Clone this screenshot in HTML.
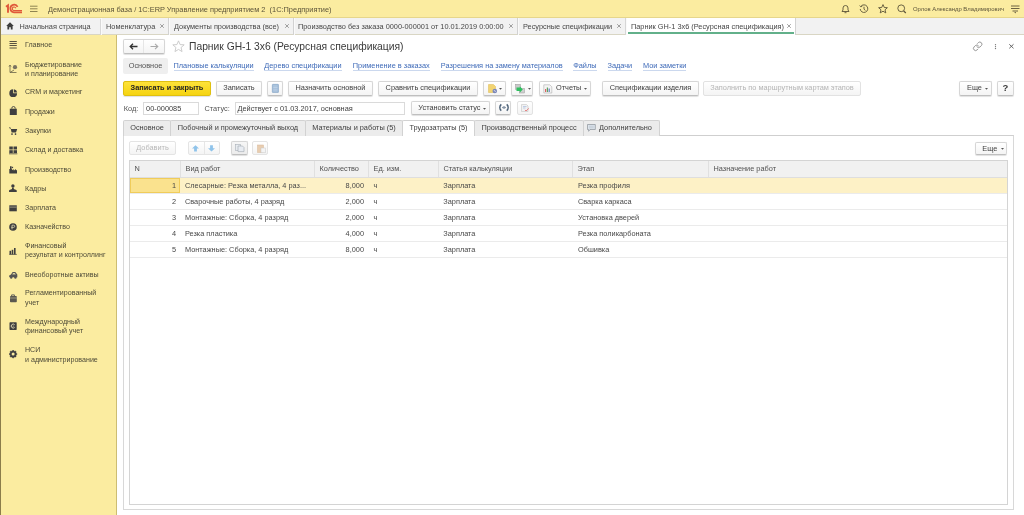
<!DOCTYPE html><html><head><meta charset="utf-8"><style>
*{box-sizing:border-box;margin:0;padding:0}
html,body{width:1024px;height:515px;overflow:hidden;background:#fff;font-family:"Liberation Sans",sans-serif;font-size:7.35px;color:#404040}
.a{position:absolute;white-space:nowrap}
svg{position:absolute;overflow:visible}
#top{left:0;top:0;width:1024px;height:18px;background:#fbeca0;border-bottom:1px solid #e6d68c}
#lbar{left:0;top:0;width:1px;height:515px;background:#8b7d4a;z-index:5}
#tabs{left:0;top:18px;width:1024px;height:17px;background:#f2f2f2;border-bottom:1px solid #d9d6c4}
.wt{position:absolute;top:18px;height:17px;line-height:16px;color:#474747;border-right:1px solid #d2d2d2;box-shadow:inset 1px 0 0 #fafafa;white-space:nowrap}
.wt .t{position:absolute;top:0.8px}
.wt .x{position:absolute;top:0;color:#777;font-size:7.5px}
#side{left:0;top:35px;width:117px;height:480px;background:#fbeca0;border-right:1px solid #cdbd72}
.si{position:absolute;left:25px;color:#4d4a38;font-size:7.1px;line-height:9.2px;white-space:nowrap}
.btn{position:absolute;height:15px;line-height:11.5px;border:1px solid #d6d6d6;border-bottom-color:#bfbfbf;border-radius:2px;background:linear-gradient(#fff,#f4f4f4);box-shadow:0 0.6px 0.8px rgba(0,0,0,.12);text-align:center;color:#404040;white-space:nowrap}
.lnk{position:absolute;top:62px;color:#3e6ab8;border-bottom:1px solid #cbd8ee;line-height:8px;white-space:nowrap}
.inp{position:absolute;height:13px;line-height:11px;border:1px solid #dadada;background:#fff;padding-left:3px;color:#404040;white-space:nowrap}
.tab{position:absolute;top:120px;height:16px;line-height:14px;background:#ececec;border:1px solid #d2d2d2;border-bottom:none;text-align:center;color:#404040;border-radius:2px 2px 0 0;white-space:nowrap}
.th{position:absolute;top:161px;height:16px;line-height:16px;color:#505050;border-left:1px solid #e2e2e2;white-space:nowrap}
.row{position:absolute;left:130px;width:877px;height:16px;border-bottom:1px solid #ececec}
.c{position:absolute;line-height:16px;color:#484848;white-space:nowrap}
.s{}
html{background:#fff}
body{filter:blur(0.45px)}
</style></head><body>
<div id="top" class="a"></div>
<div id="tabs" class="a"></div>
<div id="side" class="a"></div>
<div id="lbar" class="a"></div>
<svg style="left:0;top:0" width="48" height="18" viewBox="0 0 48 18"><path d="M6 6.8 L8 5.3 V12.7" stroke="#e0583a" stroke-width="1.9" fill="none"/><path d="M17.6 6.9 A3.8 3.8 0 1 0 14 12.3 H22" stroke="#e0583a" stroke-width="1.7" fill="none"/><path d="M15.8 8.2 A1.8 1.8 0 1 0 14 10.6 H22" stroke="#e0583a" stroke-width="1.1" fill="none"/></svg>
<svg style="left:30px;top:5px" width="8" height="8" viewBox="0 0 8 8"><path d="M0 1.2 H7.5 M0 3.8 H7.5 M0 6.5 H7.5" stroke="#8f8452" stroke-width="1"/></svg>
<div class="a" style="left:48px;top:4.5px;line-height:10px;color:#5b5339;font-size:7.4px"><span class="s">Демонстрационная база / 1С:ERP Управление предприятием 2&nbsp; (1С:Предприятие)</span></div>
<svg style="left:841px;top:4px" width="9" height="10" viewBox="0 0 9 10"><path d="M1 7.5 H8 L7 6 V4 A2.5 2.5 0 0 0 2 4 V6 Z M3.5 8.7 H5.5" stroke="#5b5339" stroke-width="0.9" fill="none"/></svg>
<svg style="left:859px;top:4px" width="10" height="10" viewBox="0 0 10 10"><path d="M2 2.3 A3.8 3.8 0 1 1 1.2 5" stroke="#5b5339" stroke-width="0.9" fill="none"/><path d="M0.6 1.5 L1.9 3 L3.5 1.8" stroke="#5b5339" stroke-width="0.8" fill="none"/><path d="M5 2.8 V5.2 L6.4 6.4" stroke="#5b5339" stroke-width="0.9" fill="none"/></svg>
<svg style="left:878px;top:4px" width="10" height="10" viewBox="0 0 10 10"><path d="M5 0.6 L6.3 3.5 L9.4 3.7 L7 5.8 L7.8 8.9 L5 7.2 L2.2 8.9 L3 5.8 L0.6 3.7 L3.7 3.5 Z" stroke="#5b5339" stroke-width="0.9" fill="none" stroke-linejoin="round"/></svg>
<svg style="left:897px;top:4px" width="10" height="10" viewBox="0 0 10 10"><circle cx="4.2" cy="4.3" r="3.4" stroke="#5b5339" stroke-width="0.9" fill="none"/><path d="M6.6 6.8 L8.8 9" stroke="#5b5339" stroke-width="1.2"/></svg>
<div class="a" style="left:913px;top:5px;line-height:8px;color:#5b5339;font-size:5.9px"><span class="s">Орлов Александр Владимирович</span></div>
<svg style="left:1011px;top:5px" width="9" height="9" viewBox="0 0 9 9"><path d="M0 1 H8.5 M0 3.5 H8.5 M1.5 6 H7" stroke="#5b5339" stroke-width="0.9"/><path d="M3.4 7 L4.25 8.5 L5.1 7Z" fill="#5b5339"/></svg>
<svg style="left:6px;top:22px" width="8" height="8" viewBox="0 0 8 8"><path d="M4 0.3 L7.8 4 H6.6 V7.6 H4.8 V5.3 H3.2 V7.6 H1.4 V4 H0.2 Z" fill="#3d3d3d"/></svg>
<div class="a" style="left:19.5px;top:18.8px;line-height:16px;color:#474747"><span class="s">Начальная страница</span></div>
<div class="a" style="left:100px;top:19px;width:1px;height:16px;background:#d8d8d8"></div>
<div class="wt" style="left:101px;width:68px"><span class="t" style="left:5.0px"><span class="s">Номенклатура</span></span><svg style="right:4.5px;top:6px;width:4px;height:4px" viewBox="0 0 4 4"><path d="M0.2 0.2 L3.8 3.8 M3.8 0.2 L0.2 3.8" stroke="#7a7a7a" stroke-width="0.7"/></svg></div>
<div class="wt" style="left:169px;width:125px"><span class="t" style="left:5.0px"><span class="s">Документы производства (все)</span></span><svg style="right:4.5px;top:6px;width:4px;height:4px" viewBox="0 0 4 4"><path d="M0.2 0.2 L3.8 3.8 M3.8 0.2 L0.2 3.8" stroke="#7a7a7a" stroke-width="0.7"/></svg></div>
<div class="wt" style="left:294px;width:224px"><span class="t" style="left:4.0px"><span class="s">Производство без заказа 0000-000001 от 10.01.2019 0:00:00</span></span><svg style="right:4.5px;top:6px;width:4px;height:4px" viewBox="0 0 4 4"><path d="M0.2 0.2 L3.8 3.8 M3.8 0.2 L0.2 3.8" stroke="#7a7a7a" stroke-width="0.7"/></svg></div>
<div class="wt" style="left:518px;width:108px"><span class="t" style="left:5.0px"><span class="s">Ресурсные спецификации</span></span><svg style="right:4.5px;top:6px;width:4px;height:4px" viewBox="0 0 4 4"><path d="M0.2 0.2 L3.8 3.8 M3.8 0.2 L0.2 3.8" stroke="#7a7a7a" stroke-width="0.7"/></svg></div>
<div class="wt" style="left:625px;width:171px;background:#fff;border-left:1px solid #d6d6d6"><span class="t" style="left:5px"><span class="s">Парник GH-1 3х6 (Ресурсная спецификация)</span></span><svg style="right:4.5px;top:6px;width:4px;height:4px" viewBox="0 0 4 4"><path d="M0.2 0.2 L3.8 3.8 M3.8 0.2 L0.2 3.8" stroke="#7a7a7a" stroke-width="0.7"/></svg><div style="position:absolute;left:2px;right:1px;bottom:1px;height:2px;background:#62b08a"></div></div>
<div class="si" style="top:41.2px"><span class="s">Главное</span></div>
<div class="si" style="top:60.9px"><span class="s">Бюджетирование</span><br><span class="s">и планирование</span></div>
<div class="si" style="top:88.1px"><span class="s">CRM и маркетинг</span></div>
<div class="si" style="top:107.9px"><span class="s">Продажи</span></div>
<div class="si" style="top:127.2px"><span class="s">Закупки</span></div>
<div class="si" style="top:146.4px"><span class="s">Склад и доставка</span></div>
<div class="si" style="top:165.7px"><span class="s">Производство</span></div>
<div class="si" style="top:184.8px"><span class="s">Кадры</span></div>
<div class="si" style="top:204.2px"><span class="s">Зарплата</span></div>
<div class="si" style="top:223.4px"><span class="s">Казначейство</span></div>
<div class="si" style="top:242.2px"><span class="s">Финансовый</span><br><span class="s">результат и контроллинг</span></div>
<div class="si" style="top:270.7px"><span class="s">Внеоборотные активы</span></div>
<div class="si" style="top:289.3px"><span class="s">Регламентированный</span><br><span class="s">учет</span></div>
<div class="si" style="top:318.0px"><span class="s">Международный</span><br><span class="s">финансовый учет</span></div>
<div class="si" style="top:346.3px"><span class="s">НСИ</span><br><span class="s">и администрирование</span></div>
<svg style="left:8.5px;top:41.0px" width="9" height="9" viewBox="0 0 9 9"><path d="M0.5 0.5 H7.8 M0.5 2.5 H7.8 M0.5 4.5 H7.8 M0.5 7 H7.8" stroke="#5a5440" stroke-width="1"/></svg>
<svg style="left:8.5px;top:63.5px" width="9" height="9" viewBox="0 0 9 9"><path d="M1 8.5 V1.5 M0 2.6 L1 1 L2 2.6 M1 8.5 L7.5 8.5 M1 8.5 L5 6" stroke="#6a6448" stroke-width="0.8" fill="none"/><circle cx="6" cy="3.2" r="2.1" fill="#7a7360"/></svg>
<svg style="left:8.5px;top:88.8px" width="9" height="9" viewBox="0 0 9 9"><path d="M4.2 0.3 A3.9 3.9 0 1 0 8.1 4.2 H4.2 Z" fill="#3f3f3f"/><path d="M5 0.2 A3.8 3.8 0 0 1 8.2 3.4 H5 Z" fill="#3f3f3f"/></svg>
<svg style="left:8.5px;top:106.3px" width="9" height="9" viewBox="0 0 9 9"><path d="M2.8 2.7 V2.2 A1.7 1.7 0 0 1 6.2 2.2 V2.7" stroke="#3f3f3f" stroke-width="0.9" fill="none"/><rect x="0.8" y="2.7" width="7" height="6.3" fill="#3f3f3f"/></svg>
<svg style="left:8.5px;top:126.5px" width="9" height="9" viewBox="0 0 9 9"><path d="M0.2 0.8 L1.6 1.3 L2.6 5.6 H7 L8.2 2 H1.8 Z" fill="#3f3f3f"/><path d="M0.2 0.6 L1.8 1.2" stroke="#3f3f3f" stroke-width="0.8"/><rect x="2.3" y="6.3" width="1.4" height="1.6" fill="#3f3f3f"/><rect x="5.8" y="6.3" width="1.4" height="1.6" fill="#3f3f3f"/></svg>
<svg style="left:8.5px;top:145.8px" width="9" height="9" viewBox="0 0 9 9"><rect x="0.3" y="0.5" width="3.5" height="3" fill="#3f3f3f"/><rect x="4.5" y="0.5" width="3.5" height="3" fill="#3f3f3f"/><rect x="0.3" y="4.2" width="3.5" height="2.8" fill="#3f3f3f"/><rect x="4.5" y="4.2" width="3.5" height="2.8" fill="#3f3f3f"/><path d="M0 7.8 H8.3" stroke="#3f3f3f" stroke-width="0.8"/></svg>
<svg style="left:8.5px;top:165.5px" width="9" height="9" viewBox="0 0 9 9"><path d="M0.3 7.5 V3 H1 V0.3 H2.6 V3 L4.3 4.5 V3 L6 4.5 V3 L8 4.5 V7.5 Z" fill="#3f3f3f"/><rect x="2.8" y="0.8" width="1.3" height="1.3" fill="#3f3f3f"/></svg>
<svg style="left:8.5px;top:184.3px" width="9" height="9" viewBox="0 0 9 9"><circle cx="3.9" cy="1.9" r="1.7" fill="#3f3f3f"/><path d="M3 3.6 H4.8 V5 L7.4 6 Q7.8 6.3 7.8 7.9 H0 Q0 6.3 0.4 6 L3 5 Z" fill="#3f3f3f"/></svg>
<svg style="left:8.5px;top:204.8px" width="9" height="9" viewBox="0 0 9 9"><rect x="0.3" y="0.3" width="7.5" height="6" fill="#3f3f3f"/><rect x="0.3" y="1.6" width="7.5" height="1" fill="#9a9580"/></svg>
<svg style="left:8.5px;top:223.2px" width="9" height="9" viewBox="0 0 9 9"><circle cx="4" cy="4" r="3.8" fill="#3f3f3f"/><path d="M3 6.3 V2.2 H4.6 A1.1 1.1 0 0 1 4.6 4.4 H2.3" stroke="#cfc9a8" stroke-width="0.9" fill="none"/></svg>
<svg style="left:8.5px;top:248.2px" width="9" height="9" viewBox="0 0 9 9"><rect x="0.5" y="2.8" width="1.6" height="3.6" fill="#3f3f3f"/><rect x="2.7" y="1.8" width="1.6" height="4.6" fill="#3f3f3f"/><rect x="5" y="0" width="1.6" height="6.4" fill="#3f3f3f"/><path d="M0.2 6.4 H7.8" stroke="#3f3f3f" stroke-width="0.7"/></svg>
<svg style="left:8.5px;top:270.5px" width="9" height="9" viewBox="0 0 9 9"><path d="M0.2 6.2 V4.5 L2 3.5 L3.6 1 H6.3 L8.3 3.5 V6.2 Z" fill="#555"/><circle cx="2.2" cy="6.5" r="1.2" fill="#555"/><circle cx="6.4" cy="6.5" r="1.2" fill="#555"/><path d="M4 2 H5.8 L6.8 3.4 H3.3 Z" fill="#d8d0a0"/></svg>
<svg style="left:8.5px;top:293.5px" width="9" height="9" viewBox="0 0 9 9"><path d="M2.6 2 V0.9 H5.4 V2" stroke="#555" stroke-width="0.9" fill="none"/><rect x="1" y="2" width="6.8" height="6.2" rx="0.8" fill="#5a5850"/><path d="M1 4 H7.8" stroke="#c8c2a0" stroke-width="0.6"/></svg>
<svg style="left:8.5px;top:322.0px" width="9" height="9" viewBox="0 0 9 9"><rect x="0.5" y="0.3" width="7.2" height="7.6" rx="0.6" fill="#3f3f3f"/><path d="M5.6 2.6 A2 2 0 1 0 5.6 5.5" stroke="#ddd6b2" stroke-width="1" fill="none"/><path d="M3.6 4.1 H5.2" stroke="#ddd6b2" stroke-width="0.7"/></svg>
<svg style="left:8.5px;top:350.0px" width="9" height="9" viewBox="0 0 9 9"><path d="M8.20 4.10 L6.96 5.29 L7.00 7.00 L5.29 6.96 L4.10 8.20 L2.91 6.96 L1.20 7.00 L1.24 5.29 L0.00 4.10 L1.24 2.91 L1.20 1.20 L2.91 1.24 L4.10 0.00 L5.29 1.24 L7.00 1.20 L6.96 2.91 Z" fill="#3f3f3f" stroke="#3f3f3f" stroke-width="0.5" stroke-linejoin="round"/><circle cx="4.1" cy="4.1" r="1.5" fill="#fbeca0"/></svg>
<div class="btn" style="left:123px;top:39px;width:42px;height:14.5px;padding:0"><div style="position:absolute;left:19px;top:0;width:1px;height:12.5px;background:#e6e6e6"></div></div>
<svg style="left:129px;top:43px" width="9" height="7" viewBox="0 0 9 7"><path d="M8.5 3.5 H1.5 M4 0.8 L1.2 3.5 L4 6.2" stroke="#333" stroke-width="1.3" fill="none"/></svg>
<svg style="left:150px;top:43px" width="9" height="7" viewBox="0 0 9 7"><path d="M0.5 3.5 H7.5 M5 0.8 L7.8 3.5 L5 6.2" stroke="#aaa" stroke-width="1.1" fill="none"/></svg>
<svg style="left:171.5px;top:39.6px" width="13" height="12" viewBox="0 0 12 11.2"><path d="M6 0.8 L7.5 4.3 L11.3 4.5 L8.4 7 L9.3 10.8 L6 8.8 L2.7 10.8 L3.6 7 L0.7 4.5 L4.5 4.3 Z" stroke="#c4c4c4" stroke-width="0.8" fill="none" stroke-linejoin="round"/></svg>
<div class="a" style="left:189px;top:40px;line-height:13px;font-size:10.3px;color:#3a3a3a"><span class="s">Парник GH-1 3х6 (Ресурсная спецификация)</span></div>
<svg style="left:973.3px;top:42px" width="9.4" height="8.6" viewBox="1 2 22 20"><path d="M10 13a5 5 0 0 0 7.54.54l3-3a5 5 0 0 0-7.07-7.07l-1.72 1.71 M14 11a5 5 0 0 0-7.54-.54l-3 3a5 5 0 0 0 7.07 7.07l1.71-1.71" fill="none" stroke="#7a7a7a" stroke-width="1.8" stroke-linecap="round"/></svg>
<svg style="left:994px;top:44px" width="3" height="6" viewBox="0 0 3 6"><circle cx="1.5" cy="0.7" r="0.65" fill="#777"/><circle cx="1.5" cy="2.6" r="0.65" fill="#777"/><circle cx="1.5" cy="4.5" r="0.65" fill="#777"/></svg>
<svg style="left:1009px;top:44px" width="5" height="5" viewBox="0 0 5 5"><path d="M0.3 0.3 L4.5 4.3 M4.5 0.3 L0.3 4.3" stroke="#555" stroke-width="0.9"/></svg>
<div class="a" style="left:123px;top:58px;width:45px;height:15.5px;background:#efefef;border-radius:2px;line-height:15.5px;text-align:center;color:#555"><span class="s">Основное</span></div>
<div class="lnk" style="left:173.5px"><span class="s">Плановые калькуляции</span></div>
<div class="lnk" style="left:264.3px"><span class="s">Дерево спецификации</span></div>
<div class="lnk" style="left:352.8px"><span class="s">Применение в заказах</span></div>
<div class="lnk" style="left:440.8px"><span class="s">Разрешения на замену материалов</span></div>
<div class="lnk" style="left:573.2px"><span class="s">Файлы</span></div>
<div class="lnk" style="left:607.5px"><span class="s">Задачи</span></div>
<div class="lnk" style="left:643.0px"><span class="s">Мои заметки</span></div>
<div class="btn" style="left:123px;top:81px;width:88px;height:14.5px;background:linear-gradient(#fde23a,#f6d412);border-color:#dfc010;color:#222;font-weight:bold"><span class="s">Записать и закрыть</span></div>
<div class="btn" style="left:216px;top:81.0px;width:46px;height:14.5px;"><span class="s">Записать</span></div>
<div class="btn" style="left:267px;top:81.0px;width:16px;height:14.5px;"></div>
<div class="btn" style="left:288px;top:81.0px;width:85px;height:14.5px;"><span class="s">Назначить основной</span></div>
<div class="btn" style="left:378px;top:81.0px;width:100px;height:14.5px;"><span class="s">Сравнить спецификации</span></div>
<div class="btn" style="left:483px;top:81.0px;width:23px;height:14.5px;"></div>
<div class="btn" style="left:511px;top:81.0px;width:22px;height:14.5px;"></div>
<div class="btn" style="left:539px;top:81.0px;width:52px;height:14.5px;"><span style="position:absolute;left:16px"><span class="s">Отчеты</span></span></div>
<div class="btn" style="left:602px;top:81.0px;width:97px;height:14.5px;"><span class="s">Спецификации изделия</span></div>
<div class="btn" style="left:703px;top:81.0px;width:158px;height:14.5px;color:#b5b5b5;box-shadow:none;border-color:#e2e2e2"><span class="s">Заполнить по маршрутным картам этапов</span></div>
<div class="btn" style="left:959px;top:81.0px;width:33px;height:14.5px;"><span style="position:absolute;left:7px"><span class="s">Еще</span></span></div>
<div class="btn" style="left:997px;top:81.0px;width:17px;height:14.5px;"><b style="font-size:9.5px;color:#3a3a3a;position:relative;top:0px"><span class="s">?</span></b></div>
<div class="a" style="left:123.8px;top:103.6px;line-height:10px;color:#555"><span class="s">Код:</span></div>
<div class="inp" style="padding-left:1.8px;left:143.3px;top:101.5px;width:55.3px"><span class="s">00-000085</span></div>
<div class="a" style="left:204.5px;top:103.6px;line-height:10px;color:#555"><span class="s">Статус:</span></div>
<div class="inp" style="padding-left:2px;left:234.5px;top:101.5px;width:170px"><span class="s">Действует с 01.03.2017, основная</span></div>
<div class="btn" style="left:411px;top:101.3px;width:79px;height:13.5px;"><span style="position:absolute;left:6.3px"><span class="s">Установить статус</span></span></div>
<div class="btn" style="left:495px;top:101.3px;width:16px;height:13.5px;"></div>
<div class="btn" style="left:517px;top:101.3px;width:16px;height:13.5px;box-shadow:none;border-color:#e2e2e2"></div>
<!--ROWICONS-->
<div class="a" style="left:123px;top:135px;width:891px;height:375px;border:1px solid #d8d8d8;border-top:1px solid #cfcfcf"></div>
<div class="tab" style="left:123px;width:48px"><span class="s">Основное</span></div>
<div class="tab" style="left:170px;width:136px"><span class="s">Побочный и промежуточный выход</span></div>
<div class="tab" style="left:305px;width:98px"><span class="s">Материалы и работы (5)</span></div>
<div class="tab" style="left:474px;width:110px"><span class="s">Производственный процесс</span></div>
<div class="tab" style="left:583px;width:77px"><span style="padding-left:8px"><span class="s">Дополнительно</span></span></div>
<div class="tab" style="left:402px;width:73px;background:#fff;height:16px;z-index:2"><span class="s">Трудозатраты (5)</span></div>
<div class="btn" style="left:129px;top:140.7px;width:47px;height:14.7px;color:#b9b9b9;box-shadow:none;border-color:#e4e4e4"><span class="s">Добавить</span></div>
<div class="btn" style="left:188px;top:140.7px;width:32px;height:14.7px;box-shadow:none;border-color:#e4e4e4"><div style="position:absolute;left:15px;top:0;width:1px;height:12px;background:#e6e6e6"></div></div>
<div class="btn" style="left:231px;top:140.7px;width:17px;height:14.7px;background:linear-gradient(#f6f6f6,#ececec)"></div>
<div class="btn" style="left:252px;top:140.7px;width:16px;height:14.7px;box-shadow:none;border-color:#e4e4e4"></div>
<div class="btn" style="left:975px;top:141.6px;width:32px;height:13.5px;"><span style="position:absolute;left:6.3px"><span class="s">Еще</span></span></div>
<svg style="left:192.3px;top:144.5px" width="7" height="7" viewBox="0 0 7 7"><path d="M3.5 0.2 L7 3.6 H4.9 V6.6 H2.1 V3.6 H0Z" fill="#8fc3ea"/></svg>
<svg style="left:208.1px;top:144.5px" width="7" height="7" viewBox="0 0 7 7"><path d="M3.5 6.6 L7 3.2 H4.9 V0.2 H2.1 V3.2 H0Z" fill="#8fc3ea"/></svg>
<svg style="left:235px;top:143.8px" width="10" height="8" viewBox="0 0 10 8"><rect x="0.5" y="0.5" width="5" height="6" fill="#e8ecf0" stroke="#a8b0b8" stroke-width="0.6"/><path d="M3 2 H7.5 L9 3.5 V7.6 H3Z" fill="#e8ecf2" stroke="#a0a8b0" stroke-width="0.6"/></svg>
<svg style="left:256.5px;top:143.5px" width="9" height="9" viewBox="0 0 9 9"><rect x="0.5" y="1" width="6" height="7.5" fill="#e8cdb0" stroke="#d8b898" stroke-width="0.5"/><rect x="4" y="4" width="4.5" height="4.8" fill="#f4f4f4" stroke="#c8c8c8" stroke-width="0.5"/></svg>
<svg style="left:587px;top:124px" width="9" height="8" viewBox="0 0 9 8"><path d="M0.5 0.5 H8.3 V5.5 H3 L1.6 7.3 V5.5 H0.5Z" fill="#dde4ec" stroke="#8a9098" stroke-width="0.7" stroke-linejoin="round"/><path d="M2 2.2 H6.8 M2 3.8 H6.8" stroke="#a8b4c0" stroke-width="0.5"/></svg>
<div class="a" style="left:129px;top:160px;width:879px;height:345px;border:1px solid #d4d4d4"></div>
<div class="a" style="left:130px;top:161px;width:877px;height:17px;background:#f1f1f1;border-bottom:1px solid #dedede"></div>
<div class="a" style="left:130.0px;top:161px;height:16px;line-height:16.2px;padding-left:4.5px;color:#505050;"><span class="s">N</span></div>
<div class="a" style="left:180.0px;top:161px;height:16px;line-height:16.2px;padding-left:4.5px;color:#505050;border-left:1px solid #e0e0e0;"><span class="s">Вид работ</span></div>
<div class="a" style="left:314.0px;top:161px;height:16px;line-height:16.2px;padding-left:4.5px;color:#505050;border-left:1px solid #e0e0e0;"><span class="s">Количество</span></div>
<div class="a" style="left:368.0px;top:161px;height:16px;line-height:16.2px;padding-left:4.5px;color:#505050;border-left:1px solid #e0e0e0;"><span class="s">Ед. изм.</span></div>
<div class="a" style="left:438.0px;top:161px;height:16px;line-height:16.2px;padding-left:4.5px;color:#505050;border-left:1px solid #e0e0e0;"><span class="s">Статья калькуляции</span></div>
<div class="a" style="left:572.0px;top:161px;height:16px;line-height:16.2px;padding-left:4.5px;color:#505050;border-left:1px solid #e0e0e0;"><span class="s">Этап</span></div>
<div class="a" style="left:708.0px;top:161px;height:16px;line-height:16.2px;padding-left:4.5px;color:#505050;border-left:1px solid #e0e0e0;"><span class="s">Назначение работ</span></div>
<div class="a" style="left:130px;top:177.5px;width:877px;height:16px;border-bottom:1px solid #ebebeb;background:#fdf1c6;"></div>
<div class="a" style="left:130px;top:177.8px;width:50px;height:15px;background:#fae28e;border:1px solid #f0cc5a"></div>
<div class="c" style="left:130px;top:177.5px;width:46px;text-align:right"><span class="s">1</span></div>
<div class="c" style="left:185px;top:177.5px"><span class="s">Слесарные: Резка металла, 4 раз...</span></div>
<div class="c" style="left:314px;top:177.5px;width:50px;text-align:right"><span class="s">8,000</span></div>
<div class="c" style="left:373.5px;top:177.5px"><span class="s">ч</span></div>
<div class="c" style="left:443.3px;top:177.5px"><span class="s">Зарплата</span></div>
<div class="c" style="left:578px;top:177.5px"><span class="s">Резка профиля</span></div>
<div class="a" style="left:130px;top:193.5px;width:877px;height:16px;border-bottom:1px solid #ebebeb;"></div>
<div class="c" style="left:130px;top:193.5px;width:46px;text-align:right"><span class="s">2</span></div>
<div class="c" style="left:185px;top:193.5px"><span class="s">Сварочные работы, 4 разряд</span></div>
<div class="c" style="left:314px;top:193.5px;width:50px;text-align:right"><span class="s">2,000</span></div>
<div class="c" style="left:373.5px;top:193.5px"><span class="s">ч</span></div>
<div class="c" style="left:443.3px;top:193.5px"><span class="s">Зарплата</span></div>
<div class="c" style="left:578px;top:193.5px"><span class="s">Сварка каркаса</span></div>
<div class="a" style="left:130px;top:209.5px;width:877px;height:16px;border-bottom:1px solid #ebebeb;"></div>
<div class="c" style="left:130px;top:209.5px;width:46px;text-align:right"><span class="s">3</span></div>
<div class="c" style="left:185px;top:209.5px"><span class="s">Монтажные: Сборка, 4 разряд</span></div>
<div class="c" style="left:314px;top:209.5px;width:50px;text-align:right"><span class="s">2,000</span></div>
<div class="c" style="left:373.5px;top:209.5px"><span class="s">ч</span></div>
<div class="c" style="left:443.3px;top:209.5px"><span class="s">Зарплата</span></div>
<div class="c" style="left:578px;top:209.5px"><span class="s">Установка дверей</span></div>
<div class="a" style="left:130px;top:225.5px;width:877px;height:16px;border-bottom:1px solid #ebebeb;"></div>
<div class="c" style="left:130px;top:225.5px;width:46px;text-align:right"><span class="s">4</span></div>
<div class="c" style="left:185px;top:225.5px"><span class="s">Резка пластика</span></div>
<div class="c" style="left:314px;top:225.5px;width:50px;text-align:right"><span class="s">4,000</span></div>
<div class="c" style="left:373.5px;top:225.5px"><span class="s">ч</span></div>
<div class="c" style="left:443.3px;top:225.5px"><span class="s">Зарплата</span></div>
<div class="c" style="left:578px;top:225.5px"><span class="s">Резка поликарбоната</span></div>
<div class="a" style="left:130px;top:241.5px;width:877px;height:16px;border-bottom:1px solid #ebebeb;"></div>
<div class="c" style="left:130px;top:241.5px;width:46px;text-align:right"><span class="s">5</span></div>
<div class="c" style="left:185px;top:241.5px"><span class="s">Монтажные: Сборка, 4 разряд</span></div>
<div class="c" style="left:314px;top:241.5px;width:50px;text-align:right"><span class="s">8,000</span></div>
<div class="c" style="left:373.5px;top:241.5px"><span class="s">ч</span></div>
<div class="c" style="left:443.3px;top:241.5px"><span class="s">Зарплата</span></div>
<div class="c" style="left:578px;top:241.5px"><span class="s">Обшивка</span></div>
<svg style="left:499.3px;top:87.9px" width="3" height="2" viewBox="0 0 3 2"><path d="M0 0 H3 L1.5 1.8Z" fill="#555"/></svg>
<svg style="left:527.7px;top:87.9px" width="3" height="2" viewBox="0 0 3 2"><path d="M0 0 H3 L1.5 1.8Z" fill="#555"/></svg>
<svg style="left:584.3px;top:87.9px" width="3" height="2" viewBox="0 0 3 2"><path d="M0 0 H3 L1.5 1.8Z" fill="#555"/></svg>
<svg style="left:985.2px;top:87.9px" width="3" height="2" viewBox="0 0 3 2"><path d="M0 0 H3 L1.5 1.8Z" fill="#555"/></svg>
<svg style="left:483.0px;top:107.9px" width="3" height="2" viewBox="0 0 3 2"><path d="M0 0 H3 L1.5 1.8Z" fill="#555"/></svg>
<svg style="left:1001.2px;top:148.2px" width="3" height="2" viewBox="0 0 3 2"><path d="M0 0 H3 L1.5 1.8Z" fill="#555"/></svg>
<svg style="left:271.5px;top:83.5px" width="7" height="9" viewBox="0 0 7 9"><rect x="0.3" y="0.3" width="6.2" height="8.2" rx="0.5" fill="#9bb8d6" stroke="#7b9cc0" stroke-width="0.5"/><path d="M1.2 2 H5.6 M1.2 3.6 H5.6 M1.2 5.2 H5.6 M1.2 6.9 H5.6" stroke="#d6e4f2" stroke-width="0.6"/></svg>
<svg style="left:487.5px;top:83.5px" width="10" height="10" viewBox="0 0 10 10"><path d="M0.5 0.5 H5.5 L7.5 2.5 V8.5 H0.5 Z" fill="#f2d472" stroke="#dcb850" stroke-width="0.5"/><circle cx="6.8" cy="7" r="2.3" fill="#7a86b8"/><path d="M5.8 6.3 L7.8 7.5" stroke="#fff" stroke-width="0.7"/></svg>
<svg style="left:514.5px;top:83.5px" width="10" height="10" viewBox="0 0 10 10"><rect x="0.5" y="0.3" width="5" height="5" fill="#c9c9c9" stroke="#999" stroke-width="0.5"/><rect x="4.5" y="4.5" width="5" height="4.5" fill="#d0d0d0" stroke="#999" stroke-width="0.5"/><path d="M1.5 3.5 L4.8 3.5 L4.8 2.3 L7.8 5.5 L4.8 8.5 L4.8 7 L1.5 7 Z" fill="#2fbf5f"/></svg>
<svg style="left:542.5px;top:83.5px" width="10" height="10" viewBox="0 0 10 10"><path d="M0.8 0.8 H6.8 L8.8 2.8 V9 H0.8 Z" fill="#f4f4f4" stroke="#b0b0b0" stroke-width="0.6"/><rect x="2" y="5" width="1.2" height="3" fill="#e06060"/><rect x="3.8" y="3.5" width="1.2" height="4.5" fill="#60a060"/><rect x="5.6" y="4.5" width="1.2" height="3.5" fill="#6080c0"/></svg>
<svg style="left:498.5px;top:104px" width="10" height="7" viewBox="0 0 10 7"><path d="M2.3 0.4 C0.3 2 0.3 5 2.3 6.6 M7.7 0.4 C9.7 2 9.7 5 7.7 6.6" stroke="#4a5f75" stroke-width="1.4" fill="none"/><path d="M4.6 2 L3.2 3.5 L4.6 5Z M5.4 2 L6.8 3.5 L5.4 5Z" fill="#3e5470"/></svg>
<svg style="left:521px;top:104px" width="9" height="8" viewBox="0 0 9 8"><path d="M0.5 0.5 H5.5 L7 2 V7.5 H0.5Z" fill="#f2f2f2" stroke="#c4c4c4" stroke-width="0.6"/><path d="M2 2.5 H5.5 M2 4 H4.5" stroke="#a8bce0" stroke-width="0.7"/><path d="M4 5.9 L5 7 L7.8 4.4" stroke="#e88080" stroke-width="1" fill="none"/></svg>
</body></html>
